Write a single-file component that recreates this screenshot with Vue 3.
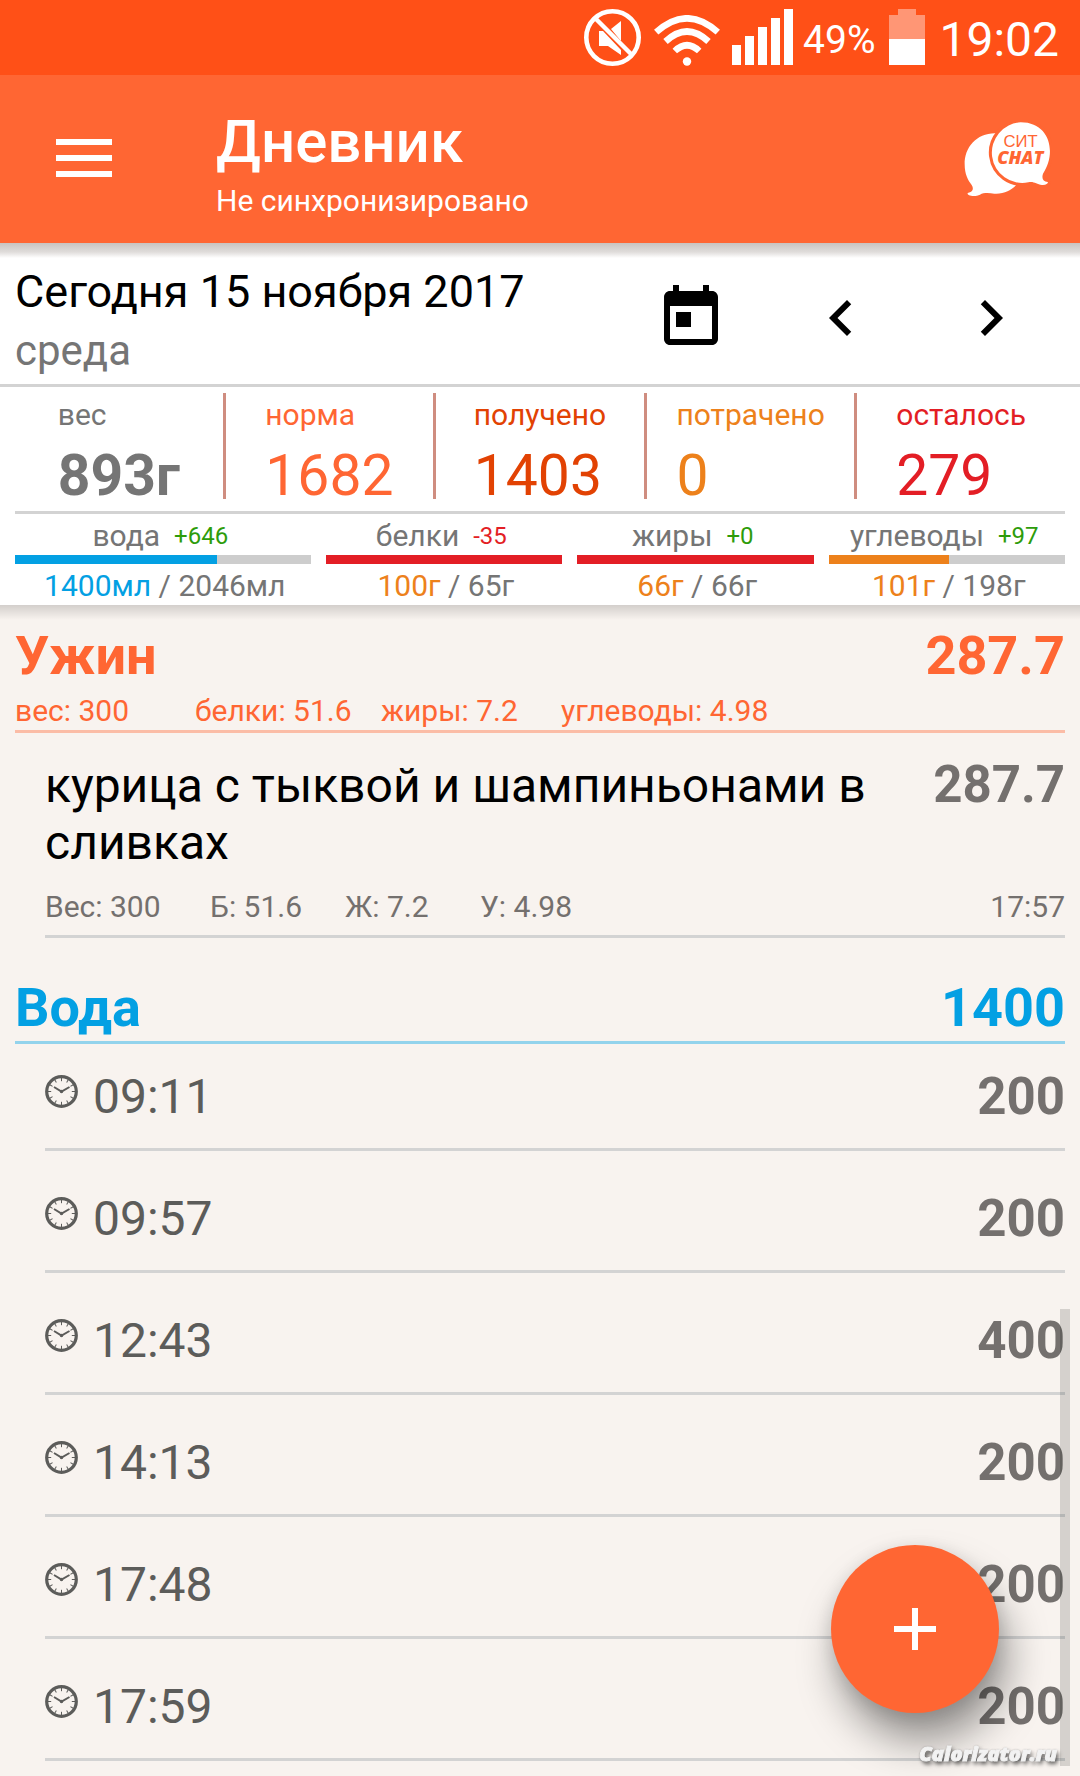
<script setup>
import { ref, computed } from 'vue';

const stats = [
  { label: 'вес', value: '893г', tone: 'gray' },
  { label: 'норма', value: '1682', tone: 'orange' },
  { label: 'получено', value: '1403', tone: 'rust' },
  { label: 'потрачено', value: '0', tone: 'amber' },
  { label: 'осталось', value: '279', tone: 'red' },
];

const macros = [
  { label: 'вода', diff: 646, current: 1400, total: 2046, unit: 'мл', bar: 'blue', tone: 'blue' },
  { label: 'белки', diff: -35, current: 100, total: 65, unit: 'г', bar: 'red', tone: 'amber' },
  { label: 'жиры', diff: 0, current: 66, total: 66, unit: 'г', bar: 'red', tone: 'amber' },
  { label: 'углеводы', diff: 97, current: 101, total: 198, unit: 'г', bar: 'amber', tone: 'amber' },
];

const water = ref([
  { time: '09:11', amount: 200 },
  { time: '09:57', amount: 200 },
  { time: '12:43', amount: 400 },
  { time: '14:13', amount: 200 },
  { time: '17:48', amount: 200 },
  { time: '17:59', amount: 200 },
]);

const waterTotal = computed(() => water.value.reduce((sum, w) => sum + w.amount, 0));

const signal = [20, 29, 38, 47, 56];
const ticks = Array.from({ length: 12 }, (_, i) => i * 30);

function percent(m) {
  return Math.min(100, (m.current / m.total) * 100) + '%';
}

function signed(n) {
  return n < 0 ? String(n) : '+' + n;
}
</script>

<template>
  <div class="page">
    <div class="status">
      <svg class="mute" viewBox="0 0 57 57">
        <circle cx="28.5" cy="28.5" r="26.2" fill="none" stroke="#fff" stroke-width="4.6" />
        <path d="M11 9L49 47" stroke="#fff" stroke-width="4.4" />
        <path d="M15 22h4l18 19v5L24 37h-9zM27 20L37 12v20z" fill="#fff" />
      </svg>
      <svg class="wifi" viewBox="0 0 66 51">
        <g fill="none" stroke="#fff" stroke-width="6.5">
          <path d="M2.2 17.2Q33-10.500 63.8 17.2" />
          <path d="M11.5 26.5Q33 6.5 54.5 26.5" />
          <path d="M20.800 36Q33 24.500 45.2 36" />
        </g>
        <circle cx="33" cy="46.5" r="4.2" fill="#fff" />
      </svg>
      <div class="signal">
        <i v-for="h in signal" :key="h" :style="{ height: h + 'px' }"></i>
      </div>
      <span class="charge">49%</span>
      <svg class="battery" viewBox="0 0 36 56">
        <path d="M9 0h18v6h9v24H0V6h9z" fill="#ff9675" />
        <path d="M0 30h36v26H0z" fill="#fff" />
      </svg>
      <span class="clock">19:02</span>
    </div>

    <header class="appbar">
      <button class="menu" aria-label="Меню">
        <svg viewBox="0 0 56 38"><path d="M0 0h56v6H0zM0 16h56v6H0zM0 32h56v6H0z" fill="#fff" /></svg>
      </button>
      <div class="heading">
        <h1>Дневник</h1>
        <p>Не синхронизировано</p>
      </div>
      <button class="chat" aria-label="Чат">
        <svg viewBox="192 95 264 225">
          <path
            d="M290 129C232 126 193 170 194 222C194 252 204 270 215 284C223 297 217 305 203 308C200 317 226 320 240 313C252 306 268 308 283 310C310 312 334 300 348 285Z"
            fill="#fff"
          />
          <path
            d="M362 96A91 91 0 1 0 385 276C402 272 409 282 426 284C440 285 446 278 443 275C430 273 424 266 429 250C470 190 452 96 362 96Z"
            fill="#fff"
            stroke="#ff6633"
            stroke-width="18"
            paint-order="stroke"
          />
          <text class="chat-top" x="362" y="170" text-anchor="middle">СИТ</text>
          <text class="chat-bottom" x="361" y="222" text-anchor="middle">CHAT</text>
        </svg>
      </button>
    </header>

    <section class="summary">
      <div class="date">
        <div>
          <h2>Сегодня 15 ноября 2017</h2>
          <p>среда</p>
        </div>
        <nav>
          <button aria-label="Календарь">
            <svg viewBox="0 0 24 24">
              <path d="M19 3h-1V1h-2v2H8V1H6v2H5c-1.110 0-1.990.9-1.990 2L3 19c0 1.100.89 2 2 2h14c1.100 0 2-.9 2-2V5c0-1.100-.9-2-2-2zm0 16H5V8h14v11zM7 10h5v5H7z" />
            </svg>
          </button>
          <button aria-label="Назад">
            <svg viewBox="0 0 24 24"><path d="M15.410 7.410L14 6l-6 6 6 6 1.410-1.410L10.830 12z" /></svg>
          </button>
          <button aria-label="Вперёд">
            <svg viewBox="0 0 24 24"><path d="M10 6L8.590 7.410 13.170 12l-4.580 4.590L10 18l6-6z" /></svg>
          </button>
        </nav>
      </div>

      <div class="stats">
        <div v-for="s in stats" :key="s.label" class="stat" :class="s.tone">
          <div>
            <span class="stat-label">{{ s.label }}</span>
            <span class="stat-value">{{ s.value }}</span>
          </div>
        </div>
      </div>

      <div class="macros">
        <div v-for="m in macros" :key="m.label" class="macro">
          <div class="macro-label">
            <span>{{ m.label }}</span>
            <small :class="m.diff < 0 ? 'red' : 'green'">{{ signed(m.diff) }}</small>
          </div>
          <div class="track">
            <div class="fill" :class="m.bar" :style="{ width: percent(m) }"></div>
          </div>
          <div class="macro-value"><span :class="m.tone">{{ m.current }}{{ m.unit }}</span> / {{ m.total }}{{ m.unit }}</div>
        </div>
      </div>
    </section>

    <main>
      <section class="meal orange">
        <div class="meal-title">
          <h3>Ужин</h3>
          <b>287.7</b>
        </div>
        <div class="meal-info">
          <span>вес: 300</span>
          <span>белки: 51.6</span>
          <span>жиры: 7.2</span>
          <span>углеводы: 4.98</span>
        </div>
      </section>

      <article class="food">
        <div class="food-title">
          <h4>курица с тыквой и шампиньонами в сливках</h4>
          <b>287.7</b>
        </div>
        <div class="food-info">
          <span>Вес: 300</span>
          <span>Б: 51.6</span>
          <span>Ж: 7.2</span>
          <span>У: 4.98</span>
          <time>17:57</time>
        </div>
      </article>

      <section class="meal water blue">
        <div class="meal-title">
          <h3>Вода</h3>
          <b>{{ waterTotal }}</b>
        </div>
      </section>

      <ul class="drinks">
        <li v-for="w in water" :key="w.time">
          <svg viewBox="0 0 33 33" fill="none" stroke="#5c5c5a">
            <circle cx="16.5" cy="16.5" r="14.8" stroke-width="3.2" />
            <path v-for="t in ticks" :key="t" d="M16.5 3v3.2" :transform="`rotate(${t} 16.5 16.5)`" />
            <path d="M9 12l7.5 4.5 8-4.5" stroke-width="2" />
            <circle cx="16.5" cy="16.5" r="1" stroke-width="1.5" />
          </svg>
          <time>{{ w.time }}</time>
          <b>{{ w.amount }}</b>
        </li>
      </ul>
    </main>

    <div class="scrollbar"></div>
    <button class="add" aria-label="Добавить">
      <svg viewBox="0 0 42 42"><path d="M18 0h6v18h18v6H24v18h-6V24H0v-6h18z" fill="#fff" /></svg>
    </button>
    <span class="watermark">Calorizator.ru</span>
  </div>
</template>

<style>
body {
  margin: 0;
  background: #f8f3ef;
}
</style>

<style scoped>
.page {
  position: relative;
  min-height: 100vh;
  font-family: Roboto, 'Noto Sans', sans-serif;
  font-size: 30px;
  line-height: 36px;
  color: #757575;
  background: #f8f3ef;
}

h1,
h2,
h3,
h4,
p,
ul {
  margin: 0;
  padding: 0;
  list-style: none;
}

button {
  display: flex;
  align-items: center;
  justify-content: center;
  padding: 0;
  border: none;
  background: none;
  cursor: pointer;
}

svg {
  display: block;
}

/* status bar */
.status {
  display: flex;
  justify-content: flex-end;
  box-sizing: border-box;
  height: 75px;
  padding: 9px 21px 0 0;
  background: #ff5017;
  color: #fff;
}

.mute {
  width: 57px;
  height: 57px;
  margin-right: 13px;
}

.wifi {
  width: 66px;
  height: 51px;
  margin: 6px 12px 0 0;
}

.signal {
  display: flex;
  align-items: flex-end;
  gap: 4px;
  height: 56px;
  margin-right: 10px;
}

.signal i {
  width: 9px;
  background: #fff;
}

.charge {
  margin-right: 14px;
  font-size: 39px;
  line-height: 62px;
}

.battery {
  width: 36px;
  height: 56px;
  margin-right: 14px;
}

.clock {
  font-size: 48px;
  line-height: 62px;
}

/* app bar */
.appbar {
  position: relative;
  z-index: 1;
  display: flex;
  padding: 31px 28px 24px 56px;
  background: #ff6633;
  color: #fff;
}

.appbar::after,
.summary::after {
  content: '';
  position: absolute;
  left: 0;
  right: 0;
  top: 100%;
  height: 15px;
  background: linear-gradient(rgba(60, 40, 30, 0.28), rgba(60, 40, 30, 0.16) 60%, rgba(60, 40, 30, 0));
}

.summary::after {
  background: linear-gradient(rgba(0, 0, 0, 0.15), rgba(0, 0, 0, 0));
}

.menu {
  align-self: flex-start;
  width: 56px;
  height: 38px;
  margin: 33px 104px 0 0;
}

.menu svg {
  width: 56px;
}

.heading {
  flex: 1;
}

h1 {
  margin-bottom: 5px;
  font-size: 60px;
  font-weight: 500;
  line-height: 72px;
}

.chat {
  align-self: flex-start;
  margin-top: 16px;
}

.chat svg {
  width: 88px;
  height: 75px;
}

.chat-top,
.chat-bottom {
  fill: #ff6633;
}

.chat-top {
  font-size: 50px;
  font-weight: 500;
}

.chat-bottom {
  font-family: 'Open Sans', 'Noto Sans', sans-serif;
  font-size: 54px;
  font-weight: 800;
  font-style: italic;
}

/* day summary */
.summary {
  position: relative;
  background: #fff;
  padding-bottom: 1px;
}

.date {
  display: flex;
  align-items: center;
  justify-content: space-between;
  padding: 23px 14px 8px 15px;
  border-bottom: 3px solid #d3d3d3;
}

h2 {
  margin-bottom: 8px;
  font-size: 45px;
  font-weight: 400;
  line-height: 52px;
  color: #000;
}

.date p {
  font-size: 42px;
  line-height: 50px;
}

.date nav {
  display: flex;
  margin-bottom: 6px;
}

.date button {
  width: 150px;
}

.date svg {
  width: 72px;
  height: 72px;
}

.stats {
  display: flex;
  margin: 0 15px;
  padding: 6px 0 12px;
  border-bottom: 3px solid #d3d3d3;
}

.stat {
  display: flex;
  flex: 1 1 0;
  justify-content: center;
  padding-top: 4px;
}

.stat + .stat {
  border-left: 3px solid #cf8d80;
}

.stat-label,
.stat-value {
  display: block;
}

.stat-value {
  margin-top: 20px;
  font-size: 57px;
  line-height: 46px;
}

.stat:first-child .stat-value {
  font-weight: 700;
}

.macros {
  display: grid;
  grid-template-columns: 5fr 4fr 4fr 4fr;
  gap: 15px;
  padding: 4px 15px 0;
}

.macro-label {
  display: flex;
  justify-content: center;
  gap: 14px;
  margin-bottom: 1px;
  padding-right: 5px;
}

.macro-label small {
  font-size: 24px;
}

.track {
  height: 9px;
  margin-bottom: 4px;
  background: #cdcdcd;
}

.fill {
  height: 100%;
  background: currentColor;
}

.macro-value {
  padding-left: 4px;
  text-align: center;
}

.gray {
  color: #757575;
}

.orange {
  color: #ff6633;
}

.rust {
  color: #e24203;
}

.amber {
  color: #ed811b;
}

.red {
  color: #e31e25;
}

.green {
  color: #2d9c0a;
}

.blue {
  color: #03a0e3;
}

/* diary */
main {
  padding: 19px 15px 0;
}

.meal {
  padding-bottom: 1px;
  border-bottom: 3px solid #fbbca6;
}

.meal-title {
  display: flex;
  justify-content: space-between;
  font-size: 54px;
  line-height: 64px;
}

h3 {
  font-size: 54px;
  font-weight: 700;
}

.meal-info {
  display: grid;
  grid-template-columns: 180px 186px 180px 1fr;
  margin-top: 5px;
}

.meal.water {
  margin-top: 38px;
  border-color: #93d3ec;
}

.food {
  margin-left: 30px;
  padding: 23px 0 10px;
  border-bottom: 3px solid #d3d3d3;
  color: #74706e;
}

.food-title {
  display: flex;
  align-items: baseline;
  justify-content: space-between;
  gap: 30px;
  margin-bottom: 18px;
  line-height: 57px;
}

h4 {
  font-size: 48px;
  font-weight: 400;
  color: #000;
}

.food-title b,
.drinks b {
  font-size: 51px;
}

.food-info {
  display: grid;
  grid-template-columns: 165px 135px 135px 1fr auto;
}

.drinks {
  margin-left: 30px;
}

.drinks li {
  display: flex;
  padding: 39px 0 22px;
  border-bottom: 3px solid #d3d3d3;
  font-size: 48px;
  line-height: 58px;
}

.drinks li:first-child {
  padding-top: 24px;
}

.drinks svg {
  width: 33px;
  height: 33px;
  margin: 7px 15px 0 0;
}

.drinks time {
  flex: 1;
  color: #5c5c5a;
}

.drinks b {
  color: #74706e;
}

/* overlays */
.scrollbar {
  position: fixed;
  right: 10px;
  bottom: 10px;
  width: 10px;
  height: 457px;
  background: rgba(0, 10, 0, 0.14);
}

.add {
  position: fixed;
  right: 81px;
  bottom: 63px;
  width: 168px;
  height: 168px;
  border-radius: 50%;
  background: #ff6633;
  box-shadow: 8px 28px 42px rgba(0, 0, 0, 0.4), 0 4px 20px rgba(0, 0, 0, 0.12);
}

.add svg {
  width: 42px;
}

.watermark {
  position: fixed;
  right: 23px;
  bottom: 8px;
  font-family: 'Open Sans', sans-serif;
  font-size: 20px;
  font-weight: 800;
  font-style: italic;
  line-height: 28px;
  color: #f2f2f2;
  -webkit-text-stroke: 1px #f2f2f2;
  text-shadow: 2px 3px 4px rgba(0, 0, 0, 0.7), 0 0 2px rgba(0, 0, 0, 0.5);
}
</style>
